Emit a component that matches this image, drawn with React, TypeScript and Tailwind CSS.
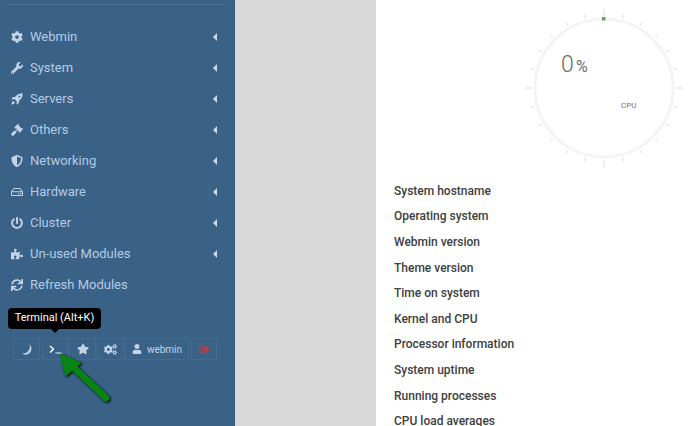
import { FaCog, FaWrench, FaGavel, FaShieldAlt, FaRegHdd, FaPowerOff, FaPuzzlePiece, FaSync, FaStar, FaCogs, FaUser, FaSignOutAlt } from "react-icons/fa";
import type { IconType } from "react-icons";

// the older, diagonal rocket from the reference
const RocketIcon: IconType = (props) => (
  <svg viewBox="0 0 16 16" fill="currentColor" {...props}>
    <path d="M15.6.4c-3.6-.2-6.6 1-8.8 3.4L5.4 5.4H2.6L.4 8.2l3 .4.8-.8 3.9 3.9-.8.8.4 3 2.8-2.2v-2.8l1.6-1.4c2.4-2.2 3.6-5.2 3.4-8.7zM2.8 10.6c-1 .5-1.9 1.7-2.4 4.9 3.2-.5 4.4-1.4 4.9-2.4z" />
    <circle cx="11.2" cy="4.8" r="1.3" fill="#3a6186" />
  </svg>
);

const menu: { label: string; icon: IconType; arrow: boolean }[] = [
  { label: "Webmin", icon: FaCog, arrow: true },
  { label: "System", icon: FaWrench, arrow: true },
  { label: "Servers", icon: RocketIcon, arrow: true },
  { label: "Others", icon: FaGavel, arrow: true },
  { label: "Networking", icon: FaShieldAlt, arrow: true },
  { label: "Hardware", icon: FaRegHdd, arrow: true },
  { label: "Cluster", icon: FaPowerOff, arrow: true },
  { label: "Un-used Modules", icon: FaPuzzlePiece, arrow: true },
  { label: "Refresh Modules", icon: FaSync, arrow: false },
];

const rows = [
  "System hostname",
  "Operating system",
  "Webmin version",
  "Theme version",
  "Time on system",
  "Kernel and CPU",
  "Processor information",
  "System uptime",
  "Running processes",
  "CPU load averages",
];

function Gauge() {
  const ticks = Array.from({ length: 24 }, (_, i) => i * 15);
  return (
    <svg width="170" height="170" viewBox="0 0 170 170" className="shrink-0">
      <circle cx="85" cy="85" r="69" fill="none" stroke="#f4f4f4" strokeWidth="3" />
      {ticks.map((a) => {
        const big = a % 90 === 0;
        const rad = (a * Math.PI) / 180;
        const r1 = 72;
        const r2 = big ? 79 : 75.5;
        return (
          <line
            key={a}
            x1={85 + r1 * Math.sin(rad)}
            y1={85 - r1 * Math.cos(rad)}
            x2={85 + r2 * Math.sin(rad)}
            y2={85 - r2 * Math.cos(rad)}
            stroke="#dcdcdc"
            strokeWidth="1"
          />
        );
      })}
      <rect x="83" y="14" width="3.5" height="3.5" fill="#4caf50" />
      <text x="42" y="69" fontSize="23" fill="#6b6b6b" fontFamily="Roboto, sans-serif" fontWeight="300">0</text>
      <text x="57" y="69" fontSize="16" fill="#6b6b6b" fontFamily="Roboto, sans-serif">%</text>
      <text x="102" y="105" fontSize="8" fill="#777" fontFamily="Roboto, sans-serif">CPU</text>
    </svg>
  );
}

export default function App() {
  return (
    <div className="flex h-[426px] w-[699px] overflow-hidden bg-white font-['Roboto',sans-serif]">
      {/* Sidebar */}
      <aside className="relative flex w-[235px] shrink-0 flex-col border-r border-[#33587b] bg-[#3a6186] px-[7px]">
        <div className="mt-1 border-t border-[#47708f]" />
        <nav className="mt-[16px] flex flex-col">
          {menu.map(({ label, icon: Icon, arrow }) => (
            <div key={label} className="flex h-[31px] items-center pr-[10px] pl-1 text-[13px] text-[#b4cbe4]">
              <span className="flex w-[12px] justify-center">
                <Icon className="h-[12px] w-[12px] text-[#c3d4e8]" />
              </span>
              <span className="ml-[7px] flex-1">{label}</span>
              {arrow && <span className="h-0 w-0 border-y-[4px] border-r-[4px] border-y-transparent border-r-[#c9d9ea]" />}
            </div>
          ))}
        </nav>

        <div className="mt-[38px] ml-[6px] flex h-[22px] gap-px text-[#c3d4e8]">
          <button className="mr-px flex w-[27px] items-center justify-center border border-[#436b90]">
            <svg viewBox="0 0 12 14" className="h-[13px] w-[11px]" fill="currentColor">
              <path d="M9 1A6.6 6.6 0 0 1 .6 11.2 7.4 7.4 0 0 0 9 1z" />
            </svg>
          </button>
          <button className="flex w-[26px] items-center justify-center border border-[#436b90]">
            <svg viewBox="0 0 13 9" className="h-[9px] w-[13px]" fill="none" strokeWidth="1.4">
              <path d="M1 1l3.5 3.2L1 7.4" stroke="#ffffff" />
              <path d="M6.5 8h6" stroke="#b4cbe4" />
            </svg>
          </button>
          <button className="flex w-[27px] items-center justify-center border border-[#436b90]">
            <FaStar className="h-[12px] w-[12px]" />
          </button>
          <button className="flex w-[27px] items-center justify-center border border-[#436b90]">
            <FaCogs className="h-[13px] w-[13px]" />
          </button>
          <button className="mr-px flex w-[64px] items-center justify-center gap-[5px] border border-[#436b90] text-[10px]">
            <FaUser className="h-[10px] w-[10px]" />
            webmin
          </button>
          <button className="flex w-[26px] items-center justify-center border border-[#436b90]">
            <FaSignOutAlt className="h-[11px] w-[11px] text-[#a9454f]" />
          </button>
        </div>

        {/* Tooltip */}
        <div className="absolute top-[308px] left-[8px] flex h-[21px] w-[93px] items-center justify-center rounded-[4px] bg-black text-[11px] text-white">
          Terminal (Alt+K)
          <span className="absolute top-full left-[43px] h-0 w-0 border-x-[4px] border-t-[4px] border-x-transparent border-t-black" />
        </div>

        {/* Annotation arrow */}
        <svg className="absolute top-[352px] left-[58px]" width="60" height="60" viewBox="0 0 60 60">
          <g style={{ filter: "drop-shadow(1px 1px 1px rgba(0,0,0,1))" }}>
            <path d="M48 46 L12 12" stroke="#078414" strokeWidth="7" strokeLinecap="round" />
            <path d="M3 3 L22 11 L8 23 Z" fill="#078414" stroke="#078414" strokeWidth="2" strokeLinejoin="round" />
          </g>
        </svg>
      </aside>

      {/* Gray gutter */}
      <div className="w-[141px] shrink-0 bg-[#d9d9d9]" />

      {/* Main */}
      <main className="flex flex-1 flex-col pl-[18px]">
        <div className="ml-[125px] mt-[3px] h-[170px]">
          <Gauge />
        </div>
        <div className="mt-[5px] flex flex-col">
          {rows.map((r) => (
            <div key={r} className="flex h-[25.6px] items-center text-[12px] font-medium text-[#404040]">
              {r}
            </div>
          ))}
        </div>
      </main>
    </div>
  );
}
